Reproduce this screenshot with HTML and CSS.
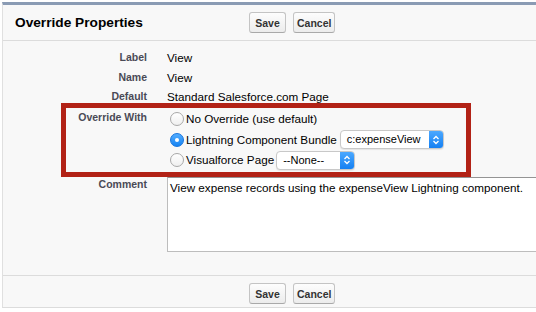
FILE: index.html
```html
<!DOCTYPE html>
<html lang="en">
<head>
  <meta charset="UTF-8">
  <title>Override Properties</title>
  <link rel="stylesheet" href="styles.css">
</head>
<body>
  <div class="panel">
    <div class="panel-head">
      <h2 class="title">Override Properties</h2>
      <div class="buttons">
        <button class="btn save">Save</button>
        <button class="btn">Cancel</button>
      </div>
    </div>

    <div class="detail">
      <div class="lbl">Label</div>
      <div class="val">View</div>

      <div class="lbl">Name</div>
      <div class="val">View</div>

      <div class="lbl">Default</div>
      <div class="val">Standard Salesforce.com Page</div>

      <div class="lbl lbl-override">Override With</div>
      <div class="val options">
        <div class="opt"><span class="radio"></span>No Override (use default)</div>
        <div class="opt"><span class="radio checked"></span>Lightning Component Bundle
          <span class="select wide"><span class="select-text">c:expenseView</span><span class="arrow"><svg width="8" height="12" viewBox="0 0 8 12"><path d="M1.5 5 L4 2.5 L6.5 5 M1.5 7 L4 9.5 L6.5 7" fill="none" stroke="#fff" stroke-width="1.3"/></svg></span></span>
        </div>
        <div class="opt"><span class="radio"></span>Visualforce Page
          <span class="select narrow"><span class="select-text">--None--</span><span class="arrow"><svg width="8" height="12" viewBox="0 0 8 12"><path d="M1.5 5 L4 2.5 L6.5 5 M1.5 7 L4 9.5 L6.5 7" fill="none" stroke="#fff" stroke-width="1.3"/></svg></span></span>
        </div>
      </div>

      <div class="lbl lbl-comment">Comment</div>
      <div class="val comment-cell">
        <textarea class="comment" readonly>View expense records using the expenseView Lightning component.</textarea>
      </div>

      <div class="highlight"></div>
    </div>

    <div class="panel-foot">
      <div class="title"></div>
      <div class="buttons">
        <button class="btn save">Save</button>
        <button class="btn">Cancel</button>
      </div>
    </div>
  </div>
</body>
</html>
```

FILE: styles.css
```css
body {
  margin: 0;
  padding: 2px 0 0 2px;
  background: #fff;
  font-family: "Liberation Sans", Arial, sans-serif;
  color: #000;
}
.panel {
  overflow: hidden;
  background: #f8f8f8;
  border-top: 3px solid #8a9bb4;
  border-left: 1px solid #e0e0e0;
  border-bottom: 1px solid #dcdcdc;
}
.panel-head {
  display: flex;
  align-items: center;
  height: 35px;
  border-bottom: 1px solid #dcdcdc;
}
.title {
  width: 246px;
  flex: 0 0 246px;
  box-sizing: border-box;
  padding-left: 12px;
  margin: 0;
  font-size: 13.7px;
  font-weight: bold;
}
.buttons {
  display: flex;
  gap: 7px;
}
.btn {
  height: 21px;
  padding: 0 3px;
  box-sizing: border-box;
  font-family: "Liberation Sans", Arial, sans-serif;
  font-size: 10.5px;
  font-weight: bold;
  color: #333;
  background: linear-gradient(#fdfdfd, #ececec);
  border: 1px solid #c4c4c4;
  border-bottom-color: #a9a9a9;
  border-radius: 3px;
}
.btn.save {
  min-width: 37px;
}
.detail {
  position: relative;
  display: grid;
  grid-template-columns: 144px 1fr;
  column-gap: 20px;
  padding: 7.25px 0 22.75px;
}
.lbl {
  text-align: right;
  font-size: 10.5px;
  font-weight: bold;
  color: #4a4a56;
  line-height: 19.5px;
}
.val {
  font-size: 11.7px;
  line-height: 19.5px;
  white-space: nowrap;
}
.lbl-override {
  padding-top: 2px;
  line-height: 16px;
}
.options {
  padding-top: 2px;
}
.opt {
  display: flex;
  align-items: center;
  height: 20.5px;
}
.radio {
  position: relative;
  width: 14px;
  height: 14px;
  box-sizing: border-box;
  margin: 0 2px 0 3px;
  border: 1px solid #a8a8a8;
  border-radius: 50%;
  background: linear-gradient(#fff, #efefef);
}
.radio.checked {
  border-color: #1674dd;
  background: linear-gradient(#53adff, #1583f3);
}
.radio.checked::after {
  content: "";
  position: absolute;
  left: 4px;
  top: 4px;
  width: 4px;
  height: 4px;
  border-radius: 50%;
  background: #fff;
}
.select {
  display: inline-flex;
  height: 19px;
  box-sizing: border-box;
  margin-left: 3px;
  background: #fff;
  border: 1px solid #c8c8c8;
  border-radius: 4px;
  box-shadow: 0 1px 1px rgba(0, 0, 0, 0.08);
  overflow: hidden;
}
.select.wide {
  width: 104px;
}
.select.narrow {
  width: 79px;
  margin-left: 2px;
}
.select-text {
  flex: 1;
  padding-left: 6px;
  font-size: 11px;
  line-height: 17px;
}
.arrow {
  display: flex;
  align-items: center;
  justify-content: center;
  width: 14px;
  background: linear-gradient(#4ba8ff, #1580f2);
}
.lbl-comment {
  margin-top: 7px;
  line-height: 14px;
}
.comment-cell {
  margin-top: 7px;
}
.comment {
  display: block;
  width: 420px;
  height: 75px;
  box-sizing: border-box;
  margin: 0;
  padding: 3px 2px;
  font-family: "Liberation Sans", Arial, sans-serif;
  font-size: 11.7px;
  line-height: 14px;
  color: #000;
  background: #fff;
  border: 1px solid #bdbdbd;
  border-top-color: #949494;
  resize: none;
  outline: none;
}
.highlight {
  position: absolute;
  left: 58px;
  top: 62px;
  width: 410px;
  height: 74px;
  box-sizing: border-box;
  border: 5px solid #b22216;
  pointer-events: none;
}
.panel-foot {
  display: flex;
  border-top: 1px solid #dcdcdc;
  padding: 7px 0 3px;
}
```
